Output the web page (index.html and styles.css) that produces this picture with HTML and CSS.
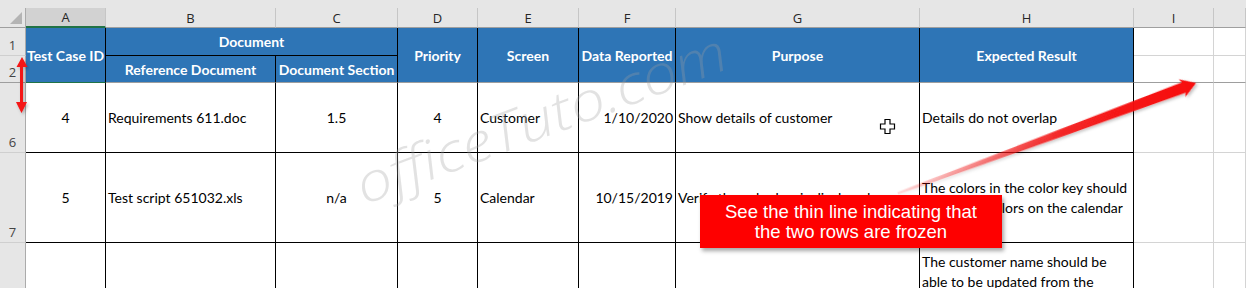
FILE: index.html
```html
<!DOCTYPE html>
<html>
<head>
<meta charset="utf-8">
<link rel="stylesheet" href="styles.css">
</head>
<body>
<div class="sheet">
  <div class="topbar"></div>
  <div class="grid">
    <div class="corner"></div>
    <div class="ch sel">A</div>
    <div class="ch">B</div>
    <div class="ch">C</div>
    <div class="ch">D</div>
    <div class="ch">E</div>
    <div class="ch">F</div>
    <div class="ch">G</div>
    <div class="ch">H</div>
    <div class="ch">I</div>
    <div class="ch"></div>

    <div class="rh">1</div>
    <div class="hd r2 selb">Test Case ID</div>
    <div class="hd c2">Document</div>
    <div class="hd r2">Priority</div>
    <div class="hd r2">Screen</div>
    <div class="hd r2">Data Reported</div>
    <div class="hd r2">Purpose</div>
    <div class="hd r2">Expected Result</div>
    <div class="gc"></div>
    <div class="gc"></div>

    <div class="rh frz">2</div>
    <div class="hd frz">Reference Document</div>
    <div class="hd frz">Document Section</div>
    <div class="gc frz"></div>
    <div class="gc frz"></div>

    <div class="rh">6</div>
    <div class="c ctr">4</div>
    <div class="c">Requirements 611.doc</div>
    <div class="c ctr">1.5</div>
    <div class="c ctr">4</div>
    <div class="c">Customer</div>
    <div class="c rt">1/10/2020</div>
    <div class="c">Show details of customer</div>
    <div class="c">Details do not overlap</div>
    <div class="gc"></div>
    <div class="gc"></div>

    <div class="rh">7</div>
    <div class="c ctr">5</div>
    <div class="c">Test script 651032.xls</div>
    <div class="c ctr">n/a</div>
    <div class="c ctr">5</div>
    <div class="c">Calendar</div>
    <div class="c rt">10/15/2019</div>
    <div class="c">Verify the color key is displayed</div>
    <div class="c wrap">The colors in the color key should<br>match the colors on the calendar</div>
    <div class="gc"></div>
    <div class="gc"></div>

    <div class="rh">8</div>
    <div class="c"></div>
    <div class="c"></div>
    <div class="c"></div>
    <div class="c"></div>
    <div class="c"></div>
    <div class="c"></div>
    <div class="c"></div>
    <div class="c wrap top">The customer name should be<br>able to be updated from the</div>
    <div class="gc"></div>
    <div class="gc"></div>
  </div>

  <svg class="overlay" width="1246" height="288" viewBox="0 0 1246 288" xmlns="http://www.w3.org/2000/svg">
    <defs>
      <linearGradient id="fade" gradientUnits="userSpaceOnUse" x1="-318" y1="0" x2="0" y2="0">
        <stop offset="0" stop-color="#f41414" stop-opacity="0.12"/>
        <stop offset="0.3" stop-color="#f41414" stop-opacity="0.55"/>
        <stop offset="0.55" stop-color="#f41414" stop-opacity="0.92"/>
        <stop offset="1" stop-color="#f80f0f" stop-opacity="1"/>
      </linearGradient>
      <filter id="sh" x="-20%" y="-20%" width="140%" height="140%">
        <feDropShadow dx="1.5" dy="2" stdDeviation="1.5" flood-color="#000" flood-opacity="0.25"/>
      </filter>
    </defs>
    <text class="wm" x="0" y="0" transform="translate(364,205) rotate(-20.5)" textLength="392" lengthAdjust="spacingAndGlyphs">officeTuto.com</text>
    <g transform="translate(1196,83) rotate(-20.3)" filter="url(#sh)">
      <polygon fill="url(#fade)" points="0,0 -15,-9.5 -13,-5.5 -318,-1.3 -318,1.3 -13,5.5 -15,9.5"/>
    </g>
    <g filter="url(#sh)" fill="#f41414">
      <polygon points="22,57 27.5,67 23,67 23,102 27,102 21.5,113 16,102 20,102 20,67 16.5,67"/>
    </g>
    <path class="cursor" d="M885 119.5 H890 V124 H894.5 V129 H890 V133.5 H885 V129 H880.5 V124 H885 Z"/>
  </svg>

  <div class="callout">See the thin line indicating that<br>the two rows are frozen</div>
</div>
</body>
</html>
```

FILE: styles.css
```css
html, body {
  margin: 0;
  padding: 0;
  background: #ffffff;
}

.sheet {
  position: relative;
  width: 1246px;
  height: 288px;
  overflow: hidden;
  font-family: Lato, "Liberation Sans", sans-serif;
  color: #000;
}

.topbar {
  height: 8px;
  background: #e6e6e6;
}

.grid {
  display: grid;
  grid-template-columns: 26px 80px 170px 122px 80px 101px 97px 244px 214px 80px 1fr;
  grid-template-rows: 20px 28px 27px 70px 90px 120px;
}

.grid > div {
  box-sizing: border-box;
  border-right: 1px solid #000;
  border-bottom: 1px solid #000;
  display: flex;
  align-items: center;
  white-space: nowrap;
  overflow: hidden;
  font-size: 14px;
}

.corner {
  position: relative;
  background: #e6e6e6;
  border-right-color: #ababab !important;
  border-bottom-color: #9f9f9f !important;
}

.corner::after {
  content: "";
  position: absolute;
  right: 3px;
  bottom: 3px;
  width: 12px;
  height: 12px;
  background: #b4b4b4;
  clip-path: polygon(100% 0, 100% 100%, 0 100%);
}

.ch {
  background: #e6e6e6;
  border-right-color: #c6c6c6 !important;
  border-bottom-color: #9f9f9f !important;
  justify-content: center;
  font-family: "Open Sans", "Liberation Sans", sans-serif;
  font-size: 13px !important;
  color: #262626;
}

.ch.sel {
  background: #d2d2d2;
  border-bottom: 2px solid #217346 !important;
}

.rh {
  background: #e6e6e6;
  border-right-color: #ababab !important;
  border-bottom-color: #cfcfcf !important;
  justify-content: center;
  align-items: flex-end !important;
  padding-bottom: 1px;
  font-family: "Open Sans", "Liberation Sans", sans-serif;
  font-size: 13px !important;
  color: #444;
}

.hd {
  background: #2e75b6;
  color: #fff;
  font-weight: 700;
  justify-content: center;
}

.r2 {
  grid-row: span 2;
  border-bottom-color: #9e9e9e !important;
}

.c2 {
  grid-column: span 2;
}

.selb {
  border-bottom: 1px solid #217346 !important;
}

.gc {
  border-right-color: #d4d4d4 !important;
  border-bottom-color: #d4d4d4 !important;
}

.frz {
  border-bottom-color: #9e9e9e !important;
}

.c {
  padding: 0 2px;
}

.ctr {
  justify-content: center;
}

.rt {
  justify-content: flex-end;
}

.wrap {
  line-height: 20px;
}

.top {
  align-items: flex-start !important;
  padding-top: 9px;
}

.overlay {
  position: absolute;
  left: 0;
  top: 0;
  pointer-events: none;
}

.wm {
  font-family: "Open Sans", sans-serif;
  font-style: italic;
  font-weight: 300;
  font-size: 54px;
  fill: rgba(160, 160, 160, 0.3);
}

.cursor {
  fill: #fff;
  stroke: #000;
  stroke-width: 1.2;
}

.callout {
  position: absolute;
  left: 700px;
  top: 195px;
  width: 302px;
  height: 53px;
  box-sizing: border-box;
  padding-top: 7px;
  background: #fe0000;
  color: #fff;
  font-family: "Liberation Sans", Arial, sans-serif;
  font-size: 18.5px;
  line-height: 20px;
  text-align: center;
  box-shadow: 2px 3px 4px rgba(0, 0, 0, 0.35);
}
```
